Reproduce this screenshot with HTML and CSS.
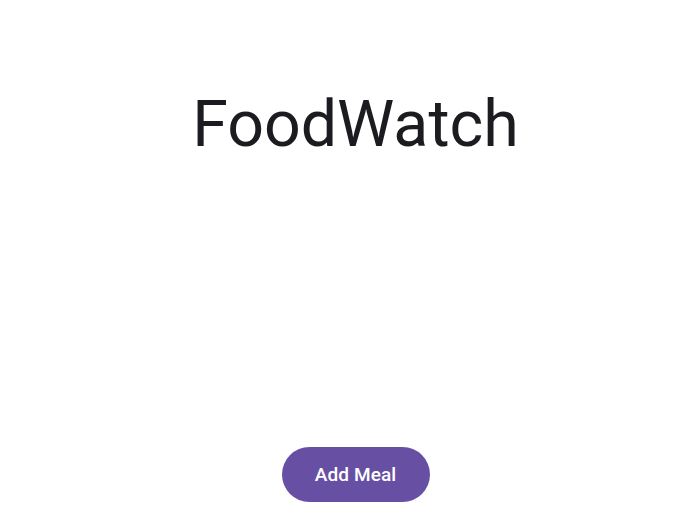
FILE: index.html
```html
<!DOCTYPE html>
<html>
<head>
<meta charset="utf-8">
<link rel="stylesheet" href="styles.css">
</head>
<body>
<main class="screen">
  <h1 class="title">FoodWatch</h1>
  <div class="spacer"></div>
  <button class="add-btn">Add Meal</button>
</main>
</body>
</html>
```
FILE: styles.css
```css
html, body {
  margin: 0;
  padding: 0;
  background: #ffffff;
}
.screen {
  width: 696px;
  height: 522px;
  display: flex;
  flex-direction: column;
  align-items: center;
  box-sizing: border-box;
  padding-top: 87px;
  padding-bottom: 20px;
  padding-left: 15px;
  font-family: Roboto, "Noto Sans", sans-serif;
}
.title {
  margin: 0;
  font-family: Roboto, sans-serif;
  font-weight: 400;
  font-size: 64.5px;
  line-height: 1.172;
  color: #1c1b1f;
}
.spacer {
  flex: 1;
}
.add-btn {
  width: 148px;
  height: 55px;
  border: none;
  border-radius: 28px;
  background: #6750a4;
  color: #ffffff;
  font-family: Roboto, sans-serif;
  font-weight: 500;
  font-size: 19px;
  letter-spacing: 0.1px;
  padding: 0;
}
```
